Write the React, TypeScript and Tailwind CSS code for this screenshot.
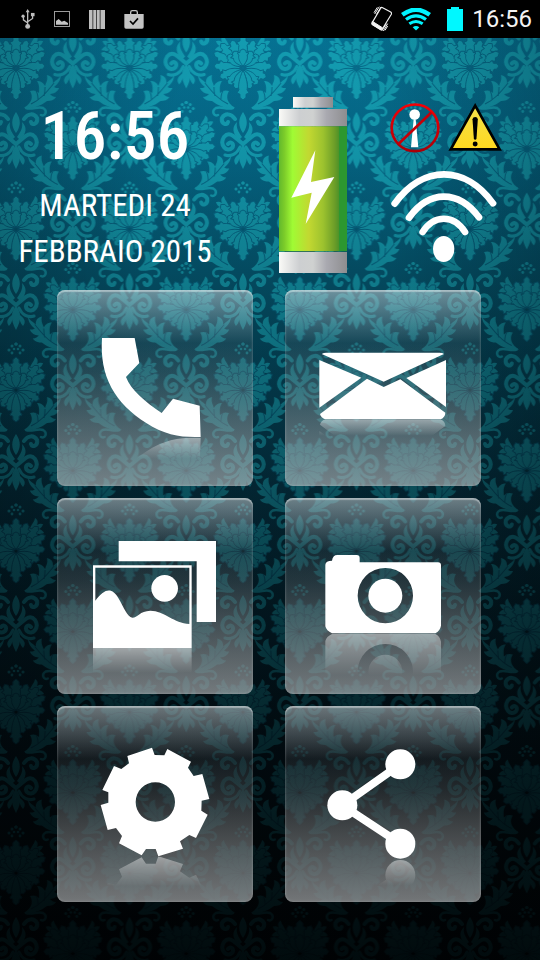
import type { ReactNode } from 'react';
import { clsx } from 'clsx';

// =====================================================================================
// TYPES
// =====================================================================================

interface TileProps {
  /** Accessible name of the shortcut */
  name: string;
  /** Unique id used for the reflection mask */
  id: string;
  viewBox: string;
  /** Floor line the icon is mirrored at */
  floor: number;
  /** Length of the reflection fade */
  fade: number;
  children: ReactNode;
}

// =====================================================================================
// WALLPAPER
// =====================================================================================

// outer petals come first so that the inner ones lie over them
const petals = [
  { angle: 62, length: 33 },
  { angle: 86, length: 29 },
  { angle: 112, length: 25 },
  { angle: 138, length: 22 },
  { angle: 42, length: 33 },
  { angle: 160, length: 22 },
  { angle: 22, length: 30 },
  { angle: 180, length: 32 },
  { angle: 0, length: 33 },
  { angle: 50, length: 20 },
  { angle: 28, length: 19 },
  { angle: 0, length: 19 },
];

function Petal({ angle, length }: { angle: number; length: number }) {
  const l = length;
  return (
    <path
      transform={`translate(0 48) rotate(${angle})`}
      d={`M0 -2 C-4 ${-l * 0.35} -5 ${-l * 0.55} -4 ${-l * 0.68} L-6 ${-l * 0.78} L-3 ${-l * 0.82} L-3 ${-l * 0.92} L0 ${-l} L3 ${-l * 0.92} L3 ${-l * 0.82} L6 ${-l * 0.78} L4 ${-l * 0.68} C5 ${-l * 0.55} 4 ${-l * 0.35} 0 -2 Z`}
      stroke="#056b8c"
      strokeWidth="0.900"
    />
  );
}

function Wallpaper() {
  return (
    <svg className="absolute inset-0 h-full w-full" aria-hidden="true">
      <defs>
        <g id="damask-half">
          {/* side sprigs */}
          <path d="M13 28 C15 21 18 20 19 15 C22 17 22 19 21 22 C24 20 26 21 27 21 C26 24 25 25 23 26 C26 27 27 28 28 30 C24 32 19 31 13 28Z" />
          {petals.map((p) => (
            <Petal key={`${p.angle}-${p.length}`} {...p} />
          ))}
          {/* crown */}
          <circle cx="0" cy="2" r="1.6" />
          <circle cx="4" cy="4" r="1.5" />
          <circle cx="7" cy="8" r="1.5" />
          <circle cx="2" cy="7" r="1.3" />
          <circle cx="4" cy="11" r="1.4" />
          {/* acanthus leaf */}
          <path d="M45 53 C44 59 41 59 37 63 C37 58 35 56 31 55 C32 61 30 62 29 66 C27 62 24 61 21 61 C24 66 23 69 23 73 C20 70 17 70 14 71 C17 76 17 82 8 88 C20 89 27 84 31 81 C35 81 38 80 40 77 C37 77 35 75 34 74 C38 74 42 71 43 68 C41 68 39 68 38 67 C42 64 45 60 45 53Z" />
          <path d="M15 84 C24 80 30 73 38 63 M22 80 C22 76 22 74 20 71 M28 76 C29 72 29 70 29 67" fill="none" stroke="#056b8c" strokeWidth="1" />
          <path d="M10 88 C16 90 22 86 27 88 C32 91 29 97 25 95" fill="none" stroke="currentColor" strokeWidth="2.500" strokeLinecap="round" />
          {/* scroll under the flower */}
          <path d="M0 92 C5 99 5 106 0 113 Z" />
          <path d="M1 117 C5 111 7 108 6 102 C11 107 11 113 4 120 Z" />
          <path d="M0 124 C8 118 13 110 19 117 C24 125 16 133 11 128 C8 125 12 120 15 124 M8 99 C12 93 18 93 21 98 C22 104 16 106 15 102" fill="none" stroke="currentColor" strokeWidth="4" strokeLinecap="round" />
          <path d="M3 127 C6 134 12 137 18 135" fill="none" stroke="currentColor" strokeWidth="3" strokeLinecap="round" />
          <path d="M0 125 C5 131 6 138 0 149Z" />
          <path d="M4 134 C9 138 10 141 7 145 C4 142 3 138 4 134Z" />
        </g>
        <g id="damask">
          <use href="#damask-half" />
          <use href="#damask-half" transform="scale(-1 1)" />
        </g>
        <pattern id="wallpaper" x="16" y="20" width="113.5" height="161" patternUnits="userSpaceOnUse">
          <g fill="#19b3c4" color="#19b3c4">
            <use href="#damask" />
            <use href="#damask" x="113.5" />
            <use href="#damask" x="56.75" y="80.5" />
            <use href="#damask" x="56.75" y="-80.5" />
          </g>
        </pattern>
        <linearGradient id="base" x1="0" y1="0" x2="0" y2="1">
          <stop offset="0" stopColor="#067b9e" />
          <stop offset="0.15" stopColor="#056b8c" />
          <stop offset="0.3" stopColor="#055a73" />
          <stop offset="0.5" stopColor="#053f52" />
          <stop offset="0.75" stopColor="#04222e" />
          <stop offset="1" stopColor="#02080c" />
        </linearGradient>
        <linearGradient id="dusk" x1="0" y1="0" x2="0" y2="1">
          <stop offset="0" stopColor="#000b12" stopOpacity="0.04" />
          <stop offset="0.15" stopColor="#000b12" stopOpacity="0.08" />
          <stop offset="0.3" stopColor="#000b12" stopOpacity="0.24" />
          <stop offset="0.5" stopColor="#00090f" stopOpacity="0.44" />
          <stop offset="0.75" stopColor="#00060a" stopOpacity="0.68" />
          <stop offset="1" stopColor="#000305" stopOpacity="0.88" />
        </linearGradient>
        <radialGradient id="vignette" cx="0.5" cy="0.25" r="0.75">
          <stop offset="0.3" stopColor="#000" stopOpacity="0" />
          <stop offset="1" stopColor="#000" stopOpacity="0.4" />
        </radialGradient>
      </defs>
      <rect width="100%" height="100%" fill="url(#base)" />
      <rect width="100%" height="100%" fill="url(#wallpaper)" opacity="0.74" />
      <rect width="100%" height="100%" fill="url(#dusk)" />
      <rect width="100%" height="100%" fill="url(#vignette)" />
    </svg>
  );
}

// =====================================================================================
// STATUS BAR
// =====================================================================================

function StatusBar() {
  return (
    <header className="relative flex h-[38px] items-center justify-between bg-black pr-2 pl-[21px]">
      <div className="flex items-center gap-[19px]">
        {/* USB */}
        <svg className="h-5 w-[14px]" viewBox="62 27 42 61" fill="none" stroke="#bdbdbd" strokeWidth="4" aria-hidden="true">
          <path d="M82 80V34M82 70L69 60V50M82 66L97 56V45" />
          <path d="M82 27L88 37H76Z" fill="#bdbdbd" stroke="none" />
          <circle cx="82" cy="80" r="7.500" fill="#bdbdbd" stroke="none" />
          <circle cx="68" cy="49" r="5" fill="#bdbdbd" stroke="none" />
          <rect x="92" y="39" width="11" height="10" fill="#bdbdbd" stroke="none" />
        </svg>
        {/* screenshot */}
        <svg className="size-4" viewBox="165 33 48 48" aria-hidden="true">
          <rect x="166.500" y="34.500" width="45" height="45" fill="none" stroke="#9b9b9b" strokeWidth="3" />
          <path d="M171 74V63L179 57L188 65L196 62L207 69V74Z" fill="#c4c4c4" />
        </svg>
        {/* bars */}
        <svg className="h-[19px] w-4" viewBox="273 28 48 57" fill="#bdbdbd" aria-hidden="true">
          <path d="M273 28h10v57h-10zM286 28h8v57h-8zM297 28h8v57h-8zM308 28h13v57h-13z" />
          <path d="M273 28h48v57h-48z" opacity="0.35" />
        </svg>
        {/* bag */}
        <svg className="h-[19px] w-5" viewBox="375 25 60 57" aria-hidden="true">
          <path d="M395 38V32Q395 27 400 27H410Q415 27 415 32V38" fill="none" stroke="#c4c4c4" strokeWidth="4" />
          <path d="M376 37H434V76Q434 81 429 81H381Q376 81 376 76Z" fill="#c4c4c4" />
          <path d="M393 58L402 67L417 50" fill="none" stroke="#000" strokeWidth="5" />
        </svg>
      </div>
      <div className="flex items-center gap-[9px]">
        {/* vibrate */}
        <svg className="h-[26px] w-[21px]" viewBox="92 20 63 78" fill="none" stroke="#f2f2f2" aria-hidden="true">
          <path d="M127 25L151 38Q155 41 153 45L126 89Q123 93 119 90L97 76Q93 73 96 69L121 27Q123 23 127 25Z" strokeWidth="3.500" />
          <path d="M96 66L126 85L121 91L95 75Z" fill="#f2f2f2" strokeWidth="3" />
          <path d="M117 22L103 44M111 24L101 40M122 23L108 46M142 73L129 95M138 73L124 95M142 80L134 93" strokeWidth="3" />
        </svg>
        {/* wifi */}
        <svg className="h-[23px] w-[30px]" viewBox="186 17 90 68" fill="none" stroke="#00f4ff" aria-hidden="true">
          <path d="M190 37Q231 6 272 37" strokeWidth="13" />
          <path d="M201 51Q231 29 261 51" strokeWidth="10" />
          <path d="M211 64Q231 50 251 64" strokeWidth="9" />
          <path d="M221 74Q231 67 241 74L231 84Z" fill="#00f4ff" stroke="none" />
        </svg>
        {/* battery */}
        <svg className="ml-[7px] h-6 w-4" viewBox="0 0 16 24" fill="#00f8ff" aria-hidden="true">
          <path d="M4 0H12V2H16V24H0V2H4Z" />
        </svg>
        <span className="font-[Roboto,sans-serif] text-2xl leading-8 text-[#f3f3f3]">16:56</span>
      </div>
    </header>
  );
}

// =====================================================================================
// WIDGETS
// =====================================================================================

function Clock() {
  const family = "font-['Roboto_Condensed','Open_Sans_Condensed','Liberation_Sans_Narrow',sans-serif]";
  return (
    <div className={clsx('w-[230px] shrink-0 text-center text-white', family)}>
      <div className="text-[66px] leading-[80px] font-medium">16:56</div>
      <div className="mt-[6px] text-[31px] leading-[46px]">
        MARTEDI 24
        <br />
        FEBBRAIO 2015
      </div>
    </div>
  );
}

function Battery() {
  return (
    <svg className="ml-[49px] h-44 w-[68px] shrink-0" viewBox="27 21 204 528" role="img" aria-label="Batteria">
      <defs>
        <linearGradient id="steel">
          <stop offset="0" stopColor="#fafaf7" />
          <stop offset="0.3" stopColor="#cdcfd1" />
          <stop offset="0.5" stopColor="#cfd1d0" />
          <stop offset="0.7" stopColor="#a9a9b0" />
          <stop offset="1" stopColor="#8d8d8f" />
        </linearGradient>
        <linearGradient id="charge">
          <stop offset="0" stopColor="#62b92c" />
          <stop offset="0.08" stopColor="#7ccc2a" />
          <stop offset="0.2" stopColor="#a0fb34" />
          <stop offset="0.44" stopColor="#c2d831" />
          <stop offset="0.65" stopColor="#9cc22e" />
          <stop offset="0.82" stopColor="#6b9d28" />
          <stop offset="0.88" stopColor="#4f9228" />
          <stop offset="0.89" stopColor="#2c9730" />
          <stop offset="1" stopColor="#2c9730" />
        </linearGradient>
      </defs>
      <path d="M69 21H189V53H69Z" fill="url(#steel)" />
      <path d="M27 57H231V109H27Z" fill="url(#steel)" />
      <path d="M27 109H231V484H27Z" fill="url(#charge)" />
      <path d="M27 486H231V549H27Z" fill="url(#steel)" />
      <path d="M136 181L64 323L125 308L107 402L193 261L123 276Z" fill="#fff" />
    </svg>
  );
}

function Signals() {
  return (
    <div className="ml-[43px] shrink-0 pt-[6px]">
      <div className="flex gap-2">
        {/* no carrier */}
        <svg className="size-[50px]" viewBox="360 41 150 147" role="img" aria-label="Nessun segnale">
          <defs>
            <linearGradient id="ban" x1="0" y1="0" x2="0" y2="1">
              <stop offset="0" stopColor="#f50006" />
              <stop offset="1" stopColor="#a80008" />
            </linearGradient>
          </defs>
          <circle cx="434" cy="74" r="16" fill="#fff" />
          <path d="M431 88H437L445 172H423Z" fill="#fff" />
          <circle cx="435" cy="114" r="70" fill="none" stroke="url(#ban)" strokeWidth="8" />
          <path d="M386 162L484 68" fill="none" stroke="#c40008" strokeWidth="8" />
        </svg>
        {/* warning */}
        <svg className="h-12 w-[54px]" viewBox="533 39 163 145" role="img" aria-label="Avviso">
          <defs>
            <linearGradient id="warn" x1="0" y1="0" x2="0" y2="1">
              <stop offset="0" stopColor="#f4e04c" />
              <stop offset="1" stopColor="#ffd91f" />
            </linearGradient>
          </defs>
          <path d="M615 47L689 179H541Z" fill="url(#warn)" stroke="#000" strokeWidth="8" />
          <path d="M607 88Q608 81 615 81Q622 81 623 88L619 146Q618 150 615 150Q612 150 611 146Z" />
          <circle cx="615" cy="163" r="7.500" />
        </svg>
      </div>
      {/* wifi strength */}
      <svg className="mt-[18px] h-[92px] w-[107px]" viewBox="362 243 321 276" role="img" aria-label="Wi-Fi">
        <g fill="none" stroke="#fff" strokeLinecap="round" strokeWidth="20">
          <path d="M376 341C460 224 588 224 671 340" />
          <path d="M419 383C480 299 567 299 629 382" />
          <path d="M460 426C494 373 553 373 587 426" />
        </g>
        <ellipse cx="523" cy="477" rx="32" ry="39" fill="#fff" />
      </svg>
    </div>
  );
}

// =====================================================================================
// SHORTCUT TILES
// =====================================================================================

function Tile({ name, id, viewBox, floor, fade, children }: TileProps) {
  return (
    <button
      type="button"
      aria-label={name}
      className="relative aspect-square overflow-hidden rounded-lg bg-[linear-gradient(to_bottom,rgba(205,214,218,0.52)_0%,rgba(180,190,196,0.32)_15%,rgba(120,125,130,0.16)_27%,rgba(140,145,148,0.24)_42%,rgba(160,163,165,0.42)_65%,rgba(185,188,190,0.62)_100%)] shadow-[inset_0_2px_1px_rgba(255,255,255,0.35),inset_0_0_3px_rgba(255,255,255,0.25)]"
    >
      <svg className="block h-full w-full" viewBox={viewBox} aria-hidden="true">
        <defs>
          <linearGradient id={`${id}-fade`} gradientUnits="userSpaceOnUse" x1="0" y1={floor} x2="0" y2={floor + fade}>
            <stop offset="0" stopColor="#fff" stopOpacity="0.45" />
            <stop offset="1" stopColor="#fff" stopOpacity="0" />
          </linearGradient>
          <mask id={`${id}-mask`} maskUnits="userSpaceOnUse" x="0" y={floor} width="630" height={fade}>
            <rect x="0" y={floor} width="630" height={fade} fill={`url(#${id}-fade)`} />
          </mask>
          <g id={`${id}-icon`} fill="#fff">
            {children}
          </g>
        </defs>
        <use href={`#${id}-icon`} />
        <g mask={`url(#${id}-mask)`}>
          <use href={`#${id}-icon`} transform={`translate(0 ${floor * 2}) scale(1 -1)`} />
        </g>
      </svg>
    </button>
  );
}

function Shortcuts() {
  return (
    <nav className="grid grid-cols-2 gap-x-8 gap-y-3 pr-[59px] pl-[57px]" aria-label="Scorciatoie">
      <Tile name="Telefono" id="phone" viewBox="21 30 588 588" floor={472} fade={65}>
        <path d="M156 174H254L268 249L228 291C242 330 285 365 335 399L369 356L449 377L452 471C395 473 345 466 290 430C195 370 148 290 156 174Z" />
      </Tile>
      <Tile name="Messaggi" id="mail" viewBox="15 30 588 588" floor={418} fade={50}>
        <path d="M125 222Q131 218 139 218H479Q487 218 492 222L374 276L311 305L258 281Z" />
        <path d="M118 240L244 293L118 383Z" />
        <path d="M498 240L379 294L498 381Z" />
        <path d="M261 296L311 321L361 298L496 398Q496 411 482 418H135Q122 412 120 402Z" />
      </Tile>
      <Tile name="Galleria" id="gallery" viewBox="21 24 588 588" floor={474} fade={75}>
        <path d="M206 153H498V396H440V214H206Z" />
        <path fillRule="evenodd" d="M129 226H425V474H129ZM136 233V332C165 292 187 293 205 324C222 352 231 381 247 383C261 384 269 363 301 362C343 362 372 400 418 402V233Z" />
        <circle cx="344" cy="295" r="40" />
      </Tile>
      <Tile name="Fotocamera" id="camera" viewBox="15 24 588 588" floor={431} fade={125}>
        <path fillRule="evenodd" d="M156 212Q158 195 172 195H230Q239 195 239 204V217H474Q483 217 483 226V407Q480 423 466 430H156Q139 422 136 409V224Q137 212 156 212ZM316 234A83 83 0 1 0 316 400A83 83 0 1 0 316 234Z" />
        <circle cx="316" cy="317" r="51" />
      </Tile>
      <Tile name="Impostazioni" id="settings" viewBox="21 18 588 588" floor={469} fade={90}>
        <path
          fillRule="evenodd"
          d="M232 168L306 143L314 165L343 166L352 147L423 185L414 203L431 228L457 222L478 297L455 302L454 332L473 344L438 414L418 405L390 424L399 446L325 469L317 447L288 447L275 466L207 430L216 408L198 384L173 390L152 315L175 308L175 277L157 270L192 198L214 207L237 190ZM316 247A59 59 0 1 0 316 365A59 59 0 1 0 316 247Z"
        />
      </Tile>
      <Tile name="Condividi" id="share" viewBox="15 18 588 588" floor={478} fade={78}>
        <path d="M361 193L187 316L361 431" fill="none" stroke="#fff" strokeWidth="24" />
        <circle cx="361" cy="193" r="45" />
        <circle cx="187" cy="316" r="45" />
        <circle cx="361" cy="431" r="45" />
      </Tile>
    </nav>
  );
}

// =====================================================================================
// APP
// =====================================================================================

export default function App() {
  return (
    <div className="relative min-h-screen overflow-hidden bg-black">
      <Wallpaper />
      <StatusBar />
      <main className="relative pb-10">
        <section className="flex items-start pt-[59px] pb-[15px]">
          <Clock />
          <Battery />
          <Signals />
        </section>
        <Shortcuts />
      </main>
    </div>
  );
}
